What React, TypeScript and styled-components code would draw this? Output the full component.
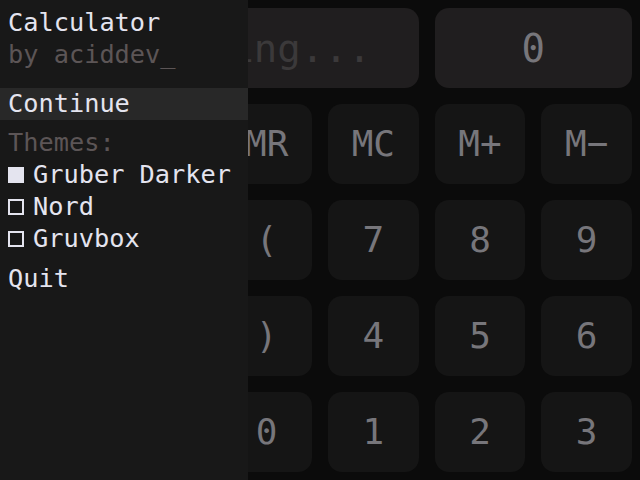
import styled, { createGlobalStyle } from "styled-components";

const GlobalStyle = createGlobalStyle`
  html, body {
    margin: 0;
    padding: 0;
    background: #0b0b0b;
    overflow: hidden;
  }
`;

const MONO = `"DejaVu Sans Mono", "Liberation Mono", monospace`;

const keys = [
  ["MS", "M×", "MR", "MC", "M+", "M−"],
  ["C", "÷", "(", "7", "8", "9"],
  ["⌫", "×", ")", "4", "5", "6"],
  ["−", "+", "0", "1", "2", "3"],
];

const themes = [
  { name: "Gruber Darker", active: true },
  { name: "Nord", active: false },
  { name: "Gruvbox", active: false },
];

export default function App() {
  return (
    <>
      <GlobalStyle />
      <Screen>
        <Calculator>
          <Display $span={4} $placeholder>
            Start typing...
          </Display>
          <Display $span={2}>0</Display>
          {keys.flat().map((k, i) => (
            <Key key={i}>{k}</Key>
          ))}
        </Calculator>

        <Menu>
          <Header>
            <Title>Calculator</Title>
            <Subtle>by aciddev_</Subtle>
          </Header>
          <Item $selected>Continue</Item>
          <Section>
            <Subtle>Themes:</Subtle>
            {themes.map((t) => (
              <ThemeRow key={t.name}>
                <Box $checked={t.active} />
                {t.name}
              </ThemeRow>
            ))}
          </Section>
          <Item>Quit</Item>
        </Menu>
      </Screen>
    </>
  );
}

const Screen = styled.div`
  position: relative;
  width: 640px;
  height: 480px;
  overflow: hidden;
  background: #0b0b0b;
`;

const Calculator = styled.div`
  display: grid;
  grid-template-columns: repeat(6, 1fr);
  grid-template-rows: repeat(5, 80px);
  gap: 16px;
  padding: 8px;
  height: 100%;
  box-sizing: border-box;
`;

const Display = styled.div<{ $span: number; $placeholder?: boolean }>`
  grid-column: span ${(p) => p.$span};
  display: flex;
  align-items: center;
  justify-content: ${(p) => (p.$placeholder ? "flex-start" : "center")};
  padding: ${(p) => (p.$placeholder ? "0 0 0 11px" : "0")};
  background: #201e1f;
  border-radius: 14px;
  font-family: ${MONO};
  font-size: 39px;
  line-height: 1;
  white-space: pre;
  color: ${(p) => (p.$placeholder ? "#3b393a" : "#77767b")};
`;

const Key = styled.div`
  display: flex;
  align-items: center;
  justify-content: center;
  background: #151515;
  border-radius: 14px;
  font-family: ${MONO};
  font-size: 36px;
  line-height: 1;
  color: #77767b;
`;

const Menu = styled.div`
  position: absolute;
  top: 0;
  left: 0;
  bottom: 0;
  width: 248px;
  background: #181818;
  display: flex;
  flex-direction: column;
  padding-top: 7px;
  box-sizing: border-box;
  font-family: ${MONO};
  font-size: 25.3px;
  line-height: 32px;
  color: #e4e4ef;
`;

const Header = styled.div`
  display: flex;
  flex-direction: column;
  padding: 0 8px;
  margin-bottom: 17px;
`;

const Title = styled.div`
  color: #e4e4ef;
`;

const Subtle = styled.div`
  color: #5c5556;
`;

const Item = styled.div<{ $selected?: boolean }>`
  padding: 0 8px;
  background: ${(p) => (p.$selected ? "#282828" : "transparent")};
`;

const Section = styled.div`
  display: flex;
  flex-direction: column;
  padding: 0 8px;
  margin: 7px 0 8px;
`;

const ThemeRow = styled.div`
  display: flex;
  align-items: center;
  gap: 9px;
`;

const Box = styled.span<{ $checked?: boolean }>`
  width: 16px;
  height: 16px;
  box-sizing: border-box;
  border: 2px solid #e4e4ef;
  background: ${(p) => (p.$checked ? "#e4e4ef" : "transparent")};
`;
